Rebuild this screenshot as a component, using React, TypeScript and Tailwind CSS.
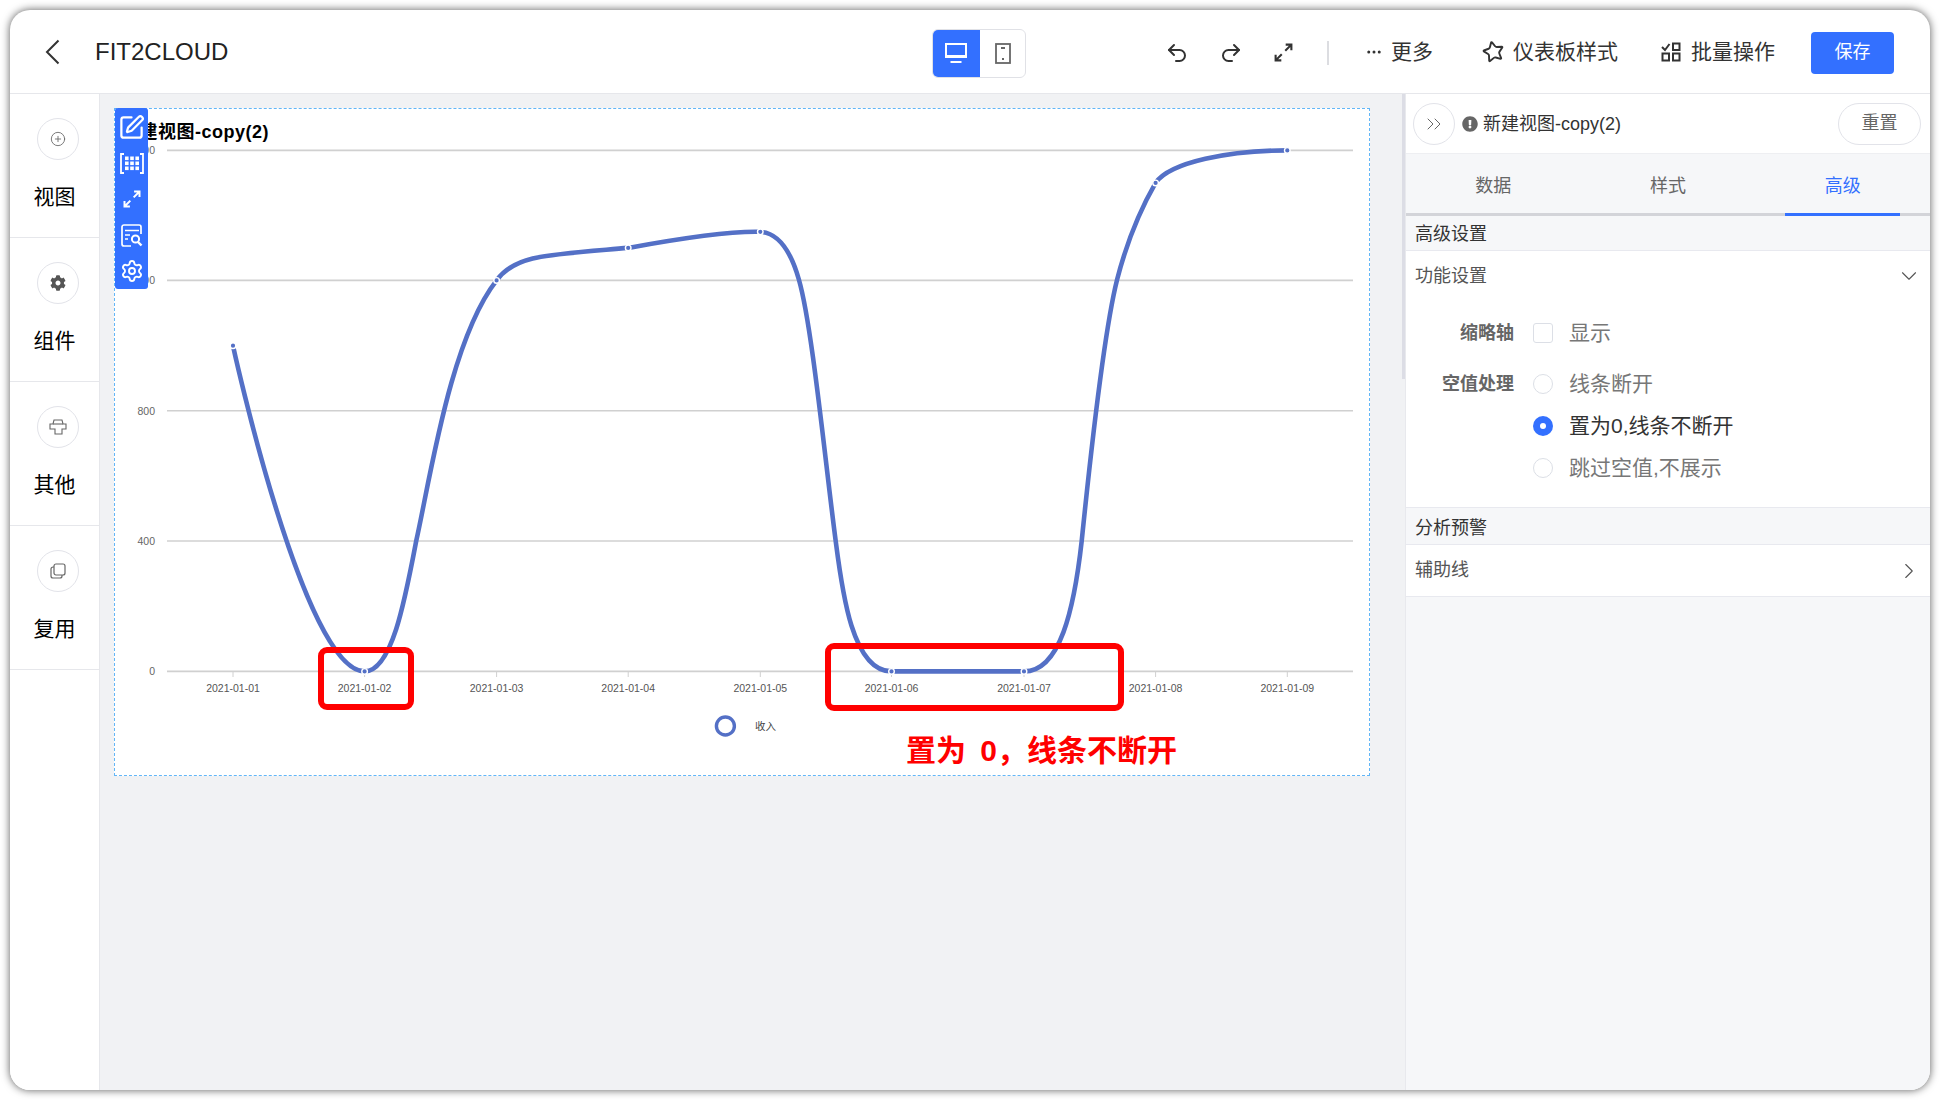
import {
  ChevronDown,
  ChevronRight,
  ChevronsRight,
  CirclePlus,
  Ellipsis,
  Redo2,
  Settings,
  SquarePen,
  Star,
  Undo2,
} from "lucide-react";
import { FaCog, FaExclamationCircle } from "react-icons/fa";
import type { ReactNode } from "react";

function BackIcon() {
  return (
    <svg width="15" height="26" viewBox="0 0 15 26" fill="none" stroke="#333" strokeWidth="2">
      <path d="M13.5 1.5L2 13l11.5 11.5" />
    </svg>
  );
}

function ExpandIcon({ size, className }: { size: number; className?: string }) {
  return (
    <svg
      width={size}
      height={size}
      viewBox="0 0 24 24"
      fill="none"
      stroke="currentColor"
      strokeWidth="2.4"
      className={className}
    >
      <path d="M14 10l7-7M14.5 3H21v6.5M10 14l-7 7M3 14.5V21h6.5" />
    </svg>
  );
}

function FieldIcon() {
  const cells = [0, 1, 2];
  return (
    <svg width="24" height="21" viewBox="0 0 24 21" fill="none">
      <path d="M4 1H1v19h3M20 1h3v19h-3" stroke="white" strokeWidth="1.8" />
      {cells.map((r) =>
        cells.map((c) => (
          <rect key={`${r}-${c}`} x={5 + c * 5.2} y={3.5 + r * 5} width="3.6" height="3.6" fill="white" />
        )),
      )}
    </svg>
  );
}

function ReportIcon() {
  return (
    <svg width="22" height="23" viewBox="0 0 22 23" fill="none" stroke="white" strokeWidth="1.7">
      <path d="M20 10V3a2 2 0 0 0-2-2H3a2 2 0 0 0-2 2v17a2 2 0 0 0 2 2h7" />
      <path d="M4 6.5h14M4 11h5M4 15h3" />
      <circle cx="14.5" cy="15" r="3.6" strokeWidth="2" />
      <path d="M17 18l3.5 3.5" strokeWidth="2.4" />
    </svg>
  );
}

function MonitorIcon() {
  return (
    <svg width="22" height="20" viewBox="0 0 22 20" fill="none" stroke="white">
      <rect x="1" y="1" width="20" height="13" strokeWidth="2" />
      <path d="M1 13h20" strokeWidth="2" />
      <path d="M5.5 19h11" strokeWidth="2" />
    </svg>
  );
}

function TabletIcon() {
  return (
    <svg width="16" height="21" viewBox="0 0 16 21" fill="none" stroke="#666">
      <rect x="1" y="1" width="14" height="19" strokeWidth="1.8" />
      <path d="M6 5h4" strokeWidth="2" />
      <path d="M7 16h2" strokeWidth="2" />
    </svg>
  );
}

function BatchIcon() {
  return (
    <svg width="20" height="20" viewBox="0 0 20 20" fill="none" stroke="#333" strokeWidth="2">
      <path d="M1 5l3 3 4.5-6" />
      <rect x="12" y="1.5" width="6.5" height="6.5" />
      <rect x="1.5" y="11.5" width="6.5" height="7" />
      <rect x="12" y="11.5" width="6.5" height="7" />
    </svg>
  );
}

function OtherIcon() {
  return (
    <svg width="18" height="16" viewBox="0 0 18 16" fill="none" stroke="#666" strokeWidth="1.1">
      <path d="M5 1h8l1 4h3v5h-4v5H6v-5H1V5h3z" />
      <path d="M4 5h10" />
    </svg>
  );
}

function ReuseIcon() {
  return (
    <svg width="16" height="16" viewBox="0 0 16 16" fill="none" stroke="#666" strokeWidth="1.2">
      <rect x="4" y="1" width="11" height="11" rx="2" />
      <path d="M4 4H3a2 2 0 0 0-2 2v7a2 2 0 0 0 2 2h7a2 2 0 0 0 2-2v-1" />
    </svg>
  );
}

const navItems: { label: string; icon: ReactNode }[] = [
  { label: "视图", icon: <CirclePlus size={16} strokeWidth={1.3} color="#666" /> },
  { label: "组件", icon: <FaCog size={16} color="#555" /> },
  { label: "其他", icon: <OtherIcon /> },
  { label: "复用", icon: <ReuseIcon /> },
];

const toolbarIcons = [
  <SquarePen key="edit" size={27} strokeWidth={2} color="white" />,
  <FieldIcon key="field" />,
  <ExpandIcon key="expand" size={20} className="text-white" />,
  <ReportIcon key="report" />,
  <Settings key="gear" size={24} strokeWidth={1.9} color="white" />,
];

const dates = [
  "2021-01-01",
  "2021-01-02",
  "2021-01-03",
  "2021-01-04",
  "2021-01-05",
  "2021-01-06",
  "2021-01-07",
  "2021-01-08",
  "2021-01-09",
];

const points: [number, number][] = [
  [233, 345.7],
  [364.6, 671.4],
  [496.6, 280.4],
  [628.2, 247.9],
  [760.3, 231.8],
  [891.5, 671.4],
  [1024, 671.4],
  [1155.6, 182.9],
  [1287.3, 150.4],
];

const linePath = [
  "M233 345.7C233 345.7 304 671.4 364.6 671.4",
  "C392 671 405 600 416.2 541",
  "C430 480 450 340 496.6 280.4",
  "C515 255 545 255 628.2 247.9",
  "C693.5 235.9 735 231 760.3 231.8",
  "C780 233 792 255 799 280",
  "C812 325 825 460 835.7 541",
  "C842 590 852 671.4 891.5 671.4",
  "L1024 671.4",
  "C1060 671.4 1074 610 1081.7 541",
  "C1088 480 1102 340 1117 280",
  "C1126 245 1140 210 1155.6 182.9",
  "C1170 162 1230 150.4 1287.3 150.4",
].join("");

const yAxis: [string, number][] = [
  ["1600", 150.4],
  ["1200", 280.4],
  ["800", 410.8],
  ["400", 541],
  ["0", 671.4],
];

function LineChart() {
  return (
    <svg width="1254" height="666" viewBox="115 109 1254 666" className="block">
      {yAxis.map(([label, y]) => (
        <g key={label}>
          <line x1="167" x2="1353" y1={y} y2={y} stroke="#d0d0d0" strokeWidth="1.6" />
          <text x="155" y={y + 4} textAnchor="end" fontSize="10.5" fill="#666">
            {label}
          </text>
        </g>
      ))}
      {points.map(([x], i) => (
        <g key={dates[i]}>
          <line x1={x} x2={x} y1="671" y2="677" stroke="#d0d0d0" />
          <text x={x} y="692" textAnchor="middle" fontSize="10.5" fill="#555">
            {dates[i]}
          </text>
        </g>
      ))}
      <path d={linePath} fill="none" stroke="#5470c6" strokeWidth="4.6" />
      {points.map(([x, y]) => (
        <circle key={x} cx={x} cy={y} r="2.8" fill="#5470c6" stroke="white" strokeWidth="1.4" />
      ))}
      <circle cx="725.4" cy="726" r="9" fill="white" stroke="#5470c6" strokeWidth="3.4" />
      <text x="755" y="730" fontSize="10.5" fill="#444">
        收入
      </text>
    </svg>
  );
}

function Radio({ label, checked }: { label: string; checked?: boolean }) {
  return (
    <div className="flex items-center h-[42px] pl-[127px]">
      {checked ? (
        <span className="w-5 h-5 rounded-full bg-[#3370ff] flex items-center justify-center">
          <span className="w-[6px] h-[6px] rounded-full bg-white" />
        </span>
      ) : (
        <span className="w-5 h-5 rounded-full border border-[#dcdfe6] bg-white" />
      )}
      <span className={`ml-4 text-[21px] ${checked ? "text-[#333]" : "text-[#777]"}`}>{label}</span>
    </div>
  );
}

export default function App() {
  return (
    <div className="w-[1940px] h-[1100px] bg-white p-[10px] font-['Liberation_Sans','Noto_Sans_CJK_SC',sans-serif]">
      <div className="h-full flex flex-col bg-white rounded-[20px] overflow-hidden shadow-[0_0_8px_rgba(0,0,0,0.65)]">
        <header className="h-[84px] shrink-0 flex items-center border-b border-[#e6e7eb] text-[#333]">
          <div className="w-[922px] flex items-center pl-[35px]">
            <BackIcon />
            <span className="ml-[35px] text-[24px] leading-none text-[#222]">FIT2CLOUD</span>
          </div>
          <div className="mt-[3px] w-[94px] h-[49px] flex rounded-[6px] border border-[#e0e1e6] overflow-hidden">
            <div className="w-[48px] -my-px -ml-px bg-[#3370ff] flex items-center justify-center">
              <MonitorIcon />
            </div>
            <div className="flex-1 flex items-center justify-center">
              <TabletIcon />
            </div>
          </div>
          <div className="ml-[139px] flex items-center gap-[30px] mt-[2px]">
            <Undo2 size={24} strokeWidth={2} />
            <Redo2 size={24} strokeWidth={2} />
            <ExpandIcon size={21} />
          </div>
          <span className="ml-[33px] w-[2px] h-[24px] bg-[#dcdde1] mt-[2px]" />
          <div className="ml-[36px] flex items-center gap-[8px] text-[21px]">
            <Ellipsis size={18} strokeWidth={2} />
            <span>更多</span>
          </div>
          <div className="ml-[49px] flex items-center gap-[8px] text-[21px]">
            <Star size={23} strokeWidth={2} className="-rotate-12" />
            <span>仪表板样式</span>
          </div>
          <div className="ml-[43px] flex items-center gap-[10px] text-[21px]">
            <BatchIcon />
            <span>批量操作</span>
          </div>
          <button className="ml-[36px] mt-[2px] w-[83px] h-[42px] rounded-[4px] bg-[#3370ff] text-white text-[18px]">
            保存
          </button>
        </header>

        <div className="flex-1 flex min-h-0">
          <nav className="w-[90px] shrink-0 bg-white border-r border-[#e6e7eb]">
            {navItems.map((item) => (
              <div key={item.label} className="h-[144px] flex flex-col border-b border-[#e6e7eb] pt-[24px]">
                <span className="ml-[27px] w-[42px] h-[42px] rounded-full border border-[#e2e3e9] flex items-center justify-center">
                  {item.icon}
                </span>
                <span className="mt-[22px] text-center text-[21px] leading-[30px] text-black">{item.label}</span>
              </div>
            ))}
          </nav>

          <main className="w-[1302px] shrink-0 bg-[#f1f2f4] pl-[14px] pt-[14px]">
            <div className="relative w-[1256px] h-[668px] bg-white border border-dashed border-[#62b6f7]">
              <LineChart />
              <h3 className="absolute left-[6px] top-[10px] text-[18px] leading-[26px] tracking-[0.5px] font-bold text-black">
                新建视图-copy(2)
              </h3>
              <div className="absolute left-0 -top-px w-[33px] h-[181px] rounded-[3px] bg-[#3370ff] flex flex-col items-center pt-[6px] gap-[10px]">
                {toolbarIcons.map((icon) => (
                  <span key={icon.key} className="h-[26px] flex items-center justify-center">
                    {icon}
                  </span>
                ))}
              </div>
              <span className="absolute left-[203px] top-[538px] w-[96px] h-[63px] border-[6px] border-[#ff0000] rounded-[9px]" />
              <span className="absolute left-[710px] top-[534px] w-[299px] h-[68px] border-[6px] border-[#ff0000] rounded-[9px]" />
              <span className="absolute left-[791px] top-[622px] text-[30px] leading-[40px] font-bold text-[#ff0000] [word-spacing:6px]">
                置为 0，线条不断开
              </span>
            </div>
          </main>

          <div className="w-[4px] shrink-0 bg-[#f1f2f4] border-r border-[#e8e9ed]">
            <div className="h-[285px] bg-[#dcdde5]" />
          </div>

          <aside className="flex-1 flex flex-col min-w-0 bg-[#f6f7f9]">
            <div className="h-[60px] shrink-0 flex items-center bg-white border-b border-[#eeeff2] pl-[7px] pr-[9px]">
              <span className="w-[42px] h-[42px] rounded-full border border-[#e2e3e9] flex items-center justify-center">
                <ChevronsRight size={24} strokeWidth={1} color="#666" />
              </span>
              <FaExclamationCircle size={16} color="#666" className="ml-[7px]" />
              <span className="ml-[5px] pt-[2px] text-[18px] text-[#333]">新建视图-copy(2)</span>
              <span className="ml-auto w-[83px] h-[42px] rounded-full border border-[#e2e3e9] flex items-center justify-center text-[18px] text-[#666]">
                重置
              </span>
            </div>

            <div className="h-[62px] shrink-0 grid grid-cols-3 border-b-[3px] border-[#d3d4d9] text-[18px] text-[#666]">
              <span className="flex items-center justify-center pt-[5px]">数据</span>
              <span className="flex items-center justify-center pt-[5px]">样式</span>
              <span className="flex items-center justify-center pt-[5px] text-[#3370ff] relative">
                高级
                <span className="absolute left-[30px] right-[30px] -bottom-[3px] h-[3px] bg-[#3370ff]" />
              </span>
            </div>

            <div className="h-[35px] shrink-0 flex items-center pl-[9px] pt-[2px] border-b border-[#e8e9ef] text-[18px] text-[#333]">
              高级设置
            </div>

            <div className="shrink-0 bg-white pb-[18px]">
              <div className="h-[50px] flex items-center justify-between pl-[9px] pr-[8px] text-[18px] text-[#555]">
                <span>功能设置</span>
                <ChevronDown size={26} strokeWidth={1} color="#555" />
              </div>
              <div className="mt-[12px] h-[40px] flex items-center pl-[127px] relative">
                <span className="absolute left-0 w-[108px] text-right text-[18px] font-bold text-[#666]">缩略轴</span>
                <span className="w-5 h-5 rounded-[3px] border border-[#dcdfe6]" />
                <span className="ml-4 text-[21px] text-[#777]">显示</span>
              </div>
              <div className="mt-[10px] relative">
                <span className="absolute left-0 top-[8px] w-[108px] text-right text-[18px] font-bold text-[#666]">
                  空值处理
                </span>
                <Radio label="线条断开" />
                <Radio label="置为0,线条不断开" checked />
                <Radio label="跳过空值,不展示" />
              </div>
            </div>

            <div className="h-[38px] shrink-0 flex items-center pl-[9px] pt-[4px] border-y border-[#e8e9ef] text-[18px] text-[#333]">
              分析预警
            </div>
            <div className="h-[52px] shrink-0 flex items-center justify-between bg-white pl-[9px] pr-[8px] border-b border-[#e8e9ef] text-[18px] text-[#555]">
              <span>辅助线</span>
              <ChevronRight size={26} strokeWidth={1} color="#555" />
            </div>
          </aside>
        </div>
      </div>
    </div>
  );
}
